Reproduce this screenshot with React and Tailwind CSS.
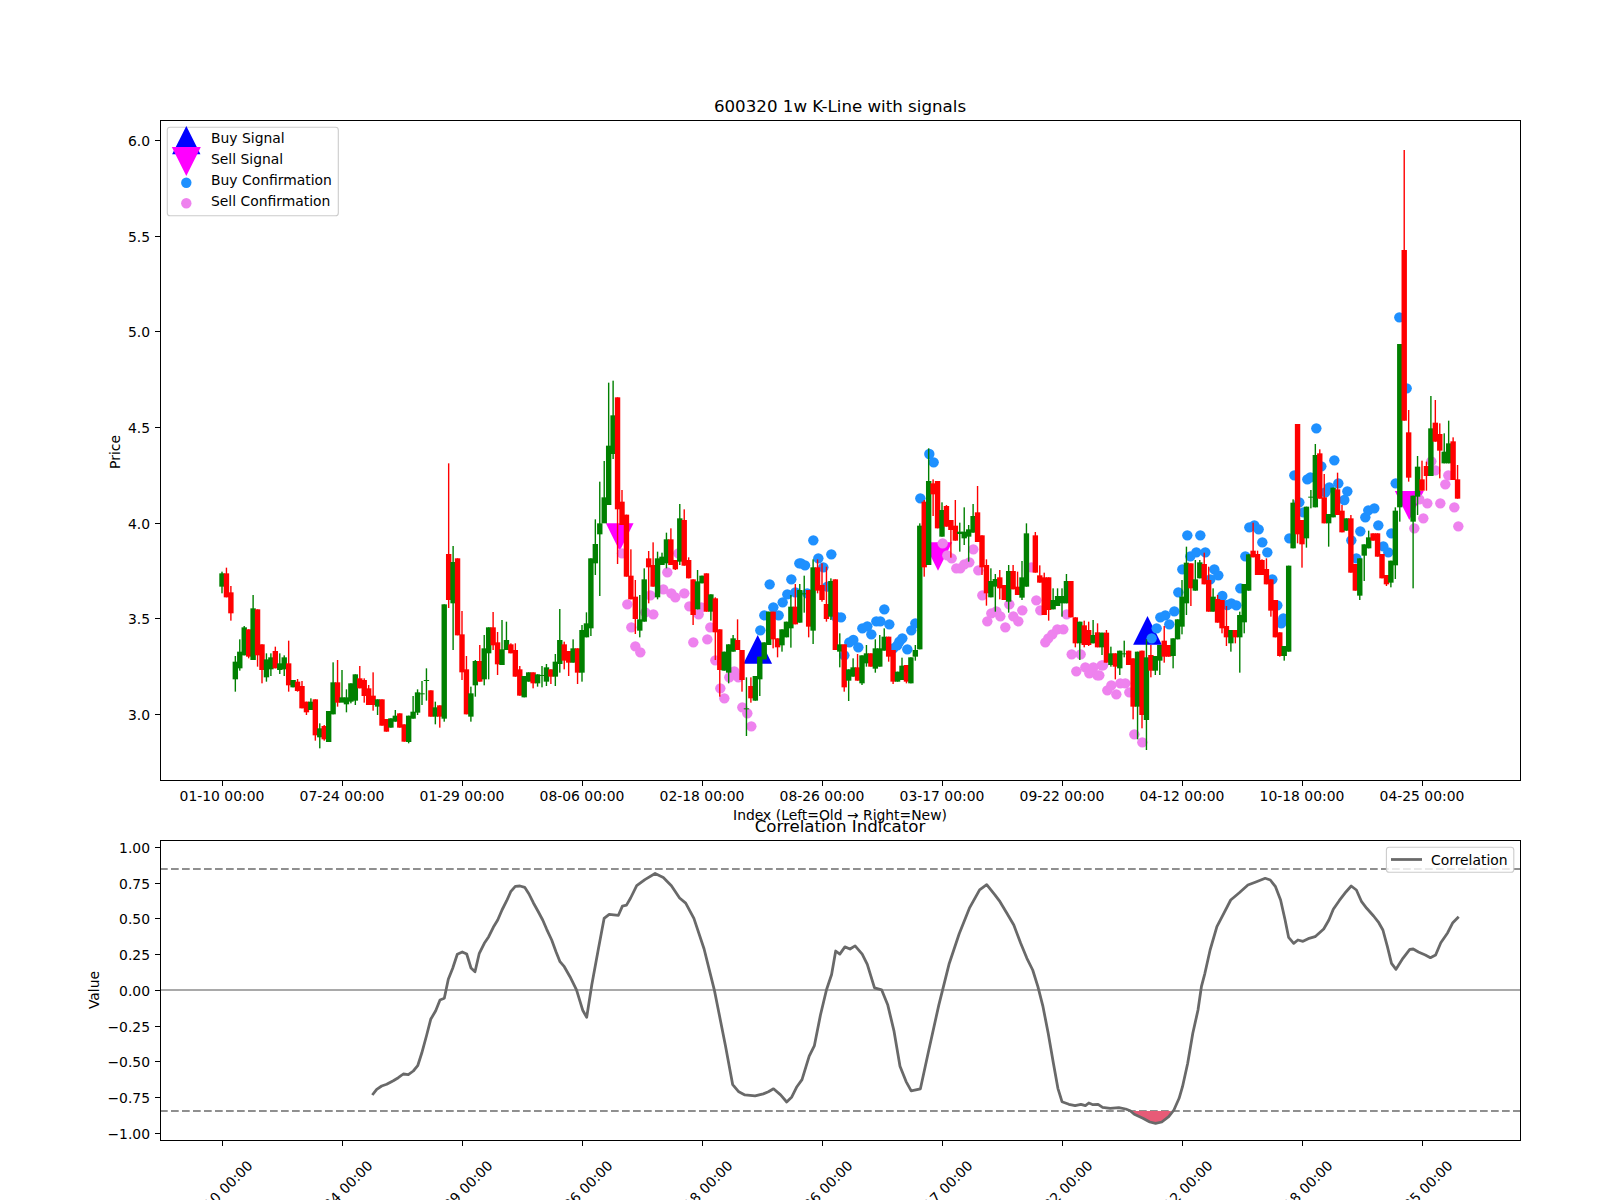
const S1 = `g 580 620 575 640;r 580 652 563 652;r 637 700 618 722;g 845 898 828 935;g 815 865 778 872;g 742 826 738 826;r 748 830 748 835;g 685 840 645 840;r 688 826 688 860;r 793 870 793 910;g 838 892 820 905;g 832 868 820 888;r 813 865 800 865;g 850 870 820 882;g 832 868 826 888;r 850 916 782 935;g 900 922 900 922;r 905 933 897 935;r 918 985 903 985;r 965 997 965 1005;g 965 990 955 990;r 958 1066 958 1082;g 1045 1072 1030 1105;r 1038 1078 1035 1082;g 993 1086 993 1086;g 907 1003 847 1003;r 907 968 840 980;g 952 968 870 960;g 952 973 928 997;g 910 965 910 970;g 883 962 883 975;r 895 925 858 925;r 900 948 895 968;r 925 975 915 975;r 947 975 877 992;g 958 980 958 1005;r 958 1037 958 1037;r 1017 1055 1017 1055;g 1015 1043 1015 1043;g 1007 1025 990 1025;r 1000 1043 1000 1043;r 1033 1085 1033 1085;g 1007 1086 1007 1090;g 995 1016 948 1016;g 937 998 928 1005;g 940 942 903 975;g 900 902 865 962;r 931 1010 931 1010;g 982 1010 965 1033;r 976 1010 976 1043;g 673 1016 673 1025;r 522 660 250 684;g 546 670 498 810;r 535 766 535 766;r 763 877 693 900;r 868 1003 828 1003;g 940 1010 920 1025;g 843 916 840 950;r 843 905 795 905;g 805 898 765 916;g 742 820 742 898;r 742 796 696 810;r 787 853 756 885`;
const S2 = `g 808 855 720 855;g 780 810 725 810;r 793 820 790 820;r 810 890 790 890;r 868 947 858 947;g 888 952 888 952;g 877 905 877 905;r 877 910 877 925;g 883 910 883 920;g 885 888 858 922;g 862 905 852 918;r 868 890 868 912;g 845 890 822 918;g 780 852 687 878;r 793 842 785 868;r 813 848 813 888;g 805 848 778 848;r 805 878 805 912;g 750 878 735 905;g 730 772 697 772;g 535 745 535 768;g 492 550 418 585;g 430 463 305 648;g 352 430 243 380;g 197 375 8 375;g 106 222 2 237;r 52 388 52 552;r 365 435 330 435;r 404 590 404 590;r 587 658 508 658;r 650 717 600 762;g 718 752 645 772;g 598 725 565 725;r 535 562 513 670;r 555 620 487 620;g 535 652 515 658;g 530 555 518 555;g 478 550 458 565;r 478 555 445 555;r 540 568 540 570;g 415 545 372 555;r 420 557 388 557;r 540 595 532 595;r 598 705 598 735;g 604 688 570 688;g 587 610 587 610;r 580 695 580 695;g 643 695 643 722;r 655 757 652 840;r 748 870 748 950;g 815 872 815 872;g 793 878 793 910;g 775 815 765 815;r 780 810 718 810;r 810 900 810 935;g 985 987 892 1068;r 918 955 892 968;g 888 962 888 962;g 830 898 830 948;g 787 838 787 838;g 695 795 695 795;r 695 778 695 805;r 775 802 775 832;g 748 796 748 815;g 725 772 725 772;g 680 745 645 803;r 680 733 612 733`;
const S3 = `g 480 578 462 578;g 490 492 437 548;r 480 590 480 622;g 412 602 388 642;r 412 482 388 490;r 465 510 400 515;r 522 567 410 575;g 453 560 445 570;r 448 660 448 660;g 643 665 610 712;r 643 772 643 785;g 718 752 718 813;g 712 740 685 740;r 712 752 672 752;g 676 760 676 765;g 670 700 645 710;r 670 710 670 710;g 655 716 628 728;g 655 710 615 710;g 620 662 595 662;r 620 680 620 695;r 660 755 660 762;g 725 755 725 755;g 707 750 683 750;r 705 755 705 760;g 682 760 682 760;g 660 680 645 692;g 287 658 280 658;r 215 412 210 440;g 153 405 55 405;r 160 193 148 258;r 153 295 153 295;g 240 320 217 320;r 228 290 225 290;r 270 300 270 383;r 287 332 210 332;g 305 312 278 365;g 305 325 232 345;g 298 320 285 395;g 258 308 222 308;r 247 336 168 336;r 316 412 316 435;r 405 490 388 527;g 453 502 415 502;g 447 470 432 545;r 442 475 420 508;r 465 510 465 510;g 423 515 405 548;r 423 478 405 478;r 470 495 425 495;g 442 503 393 510;g 310 470 280 470;x;r 316 428 306 428;r 436 458 406 458;r 442 555 428 555;r 442 540 442 572;g 510 538 475 538;g 498 528 475 528;g 498 520 475 560;g 453 520 432 520;r 453 562 453 562;r 562 640 562 652;g 575 640 575 690;r 586 645 572 652;r 600 645 575 648;g 615 640 570 640;r 607 652 580 652`;
const S4 = `g 698 742 698 765;r 698 788 690 788;g 760 795 740 800;r 760 800 760 838;g 752 805 752 825;g 760 762 722 772;r 752 795 752 795;r 775 920 775 958;g 755 920 755 1018;r 752 945 752 985;g 772 960 718 1050;r 765 812 735 832;g 768 812 768 825;g 735 782 735 825;r 722 770 678 788;r 735 770 735 770;g 715 768 715 805;g 658 718 658 718;g 590 680 540 703;g 488 610 440 645;r 490 565 490 618;g 538 572 480 572;g 487 535 480 535;r 492 553 458 553;r 540 635 500 635;g 590 635 565 635;r 597 668 585 668;r 600 685 600 700;r 678 712 618 738;g 690 730 690 755;r 690 712 690 730;g 645 712 635 818;g 552 667 552 700;g 463 572 463 572;r 452 472 368 472;r 462 525 452 525;r 480 525 478 525;r 507 553 475 553;r 538 632 538 650;r 600 712 600 712;r 697 768 697 770;g 738 768 738 782;g 497 755 497 755;g 308 445 298 445;r 72 403 72 430;r 360 433 360 503;g 320 415 320 443;g 290 292 270 325;g 165 322 132 322;r 160 296 148 296;r 292 370 222 370;g 342 370 342 440;g 263 352 263 352;r 268 345 218 345;r 332 397 315 397;g 355 392 355 392;r 355 518 345 518;r 492 572 492 572;g 475 587 475 600;g 433 467 433 543;g 412 445 392 445;r 400 422 400 422;r 400 470 400 470;r 462 535 462 535;r 525 553 525 558;g 482 548 482 562;g 332 496 322 537;g -168 322 -168 365;r -450 62 -750 62;r 97 233 30 245;g 287 365 287 565;g 200 290 168 345;r 238 272 182 272;r 198 228 185 272;g 85 228 -12 228;r 68 125 0 125;r 102 152 70 235;g 155 190 100 190;g 130 190 62 190;r 124 240 112 240;r 238 296 195 296`;

const parseCandles = () => {
  const out = [];
  [[S1, 380], [S2, 380], [S3, 430], [S4, 400]].forEach(([s, by]) => {
    s.split(";").forEach((row) => {
      const p = row.trim().split(" ");
      const i = out.length;
      if (p[0] === "x") { out.push(null); return; }
      const [bt, bb, wt, wb] = p.slice(1).map((v) => by + Number(v) / 3);
      out.push({ x: 222 + (i * 120) / 27, c: p[0] === "g" ? "#008000" : "#ff0000", bt, bb, wt, wb });
    });
  });
  return out;
};
const CANDLES = parseCandles();

const toAbs = (s, bx, by, kx, ky = kx) =>
  s.trim().split(/\s+/).map((t) => {
    const [a, b] = t.split(",").map(Number);
    return [bx + a / kx, by + b / ky];
  });

const BLUE = [
  ...toAbs("781,751 793,706 809,613 820,682 836,706 848,667 862,643 874,598 886,637 898,550", 500, 380, 3),
  ...toAbs("3,400 15,406 40,331 55,385 70,412 94,373 82,470 22,490 108,560 123,562 133,676 148,637 160,630 175,652 187,595 202,589 214,613 229,574 241,574 253,538 268,583 280,655 292,646 298,635 307,625 322,658 334,601 346,580 361,205 388,72 401,97", 800, 430, 3),
  ...toAbs("155,715 170,685 181,652 196,646 208,673 223,634 235,577 247,508 262,406 301,406 271,469 289,457 316,457 331,538 343,508 355,526 367,588 382,615 394,610 409,616 421,565 436,469 448,382 463,376 476,388 487,427 502,457 517,538 532,616 544,670 550,655 568,415 583,226 598,307 610,337 622,238 631,232 649,85 664,199 676,277 688,262 703,181 715,250 733,300 742,274 754,421 769,475 781,394 796,352 805,331 823,325 835,376 850,439 865,457 874,400 887,250", 1100, 400, 3),
  ...toAbs("298,562 320,775", 1300, 130, 3),
];
const PINK = [
  ...toAbs("366,520 382,673 394,742 406,799 421,817 436,697 451,646 460,703 490,628 502,577 514,640 526,652 535,520 553,640 568,679 580,787 596,703 604,682 622,778 631,742 646,841 661,925 673,955 688,892 703,874 715,892 727,982 742,1000 754,1039", 500, 380, 3),
  ...toAbs("428,340 442,376 455,385 469,415 481,415 493,403 508,397 520,358 535,421 547,496 562,574 574,550 589,544 601,559 616,592 628,523 640,559 655,574 667,541 694,412 709,511 721,541 736,637 745,625 757,613 772,598 790,598 800,553 815,673 842,673 829,724 856,712 868,730 880,712 892,736 905,706", 800, 430, 3),
  ...toAbs("-2,826 9,796 22,871 34,856 49,883 61,850 76,850 88,877 103,1003 127,1027 943,385 958,298 970,355 982,310 994,184 1006,211 1021,310 1036,253 1045,226 1063,322 1075,379", 1100, 400, 3),
];

const CURVE = [
  ...toAbs("907,975 920,958 935,948 950,943 970,932 985,923 1000,912 1015,914 1030,903 1043,887 1055,850 1070,795 1082,748 1097,722 1110,690 1123,685 1135,628 1148,595 1162,553 1177,546 1190,552 1203,594 1215,605 1228,550 1243,520 1256,500 1270,472 1283,450 1296,420 1310,392 1322,365 1336,349 1350,348 1364,352 1377,372 1390,398 1405,425 1418,450 1430,478 1445,510 1458,545 1470,575 1483,590 1500,620", 70, 770, 3),
  ...toAbs("565,970 571,990 575,997 580,965 586,932 592,900 597,896 606,897 610,888 614,887 618,880 624,868 632,862 642,856 650,860 658,868 666,880 672,885 680,900 690,930 700,970 705,995 711,1025 718,1063 724,1070 730,1073 740,1074 748,1072 753,1070 758,1067 765,1073 771,1080 776,1075 781,1065 786,1058 793,1035 798,1025 804,995 810,970 815,955 819,932 823,935 828,928 833,930 838,927 845,935 850,945 857,968 864,970 870,985 876,1010 882,1045 888,1060 893,1069 902,1067 910,1030 920,985 930,945 940,915 950,890 960,872 967,867 975,877", 0, 0, 0.98),
  ...toAbs("0,365 20,400 40,435 60,490 78,535 95,570 110,620 125,680 140,760 155,850 168,925 180,965 200,973 218,977 235,973 248,977 258,969 270,974 285,973 298,982 320,985 345,983 365,987 378,992 390,1003 415,1015 435,1026 452,1030 470,1026 490,1010 505,990 520,955 530,920 545,850 560,760 575,690 585,620 595,580 610,510 630,440 650,400 670,360 695,338 720,315 745,305 770,295 785,300 800,320 815,360 828,420 838,472 853,490 865,480 880,484 895,476 915,470 940,447 955,420 968,388 985,362 1005,335 1020,318 1035,330 1050,365 1065,385 1085,408 1100,428 1112,450 1125,500 1137,550 1150,568 1170,535 1190,508 1200,507 1215,516 1235,525 1250,533 1265,525 1280,488 1300,458 1315,428 1332,410", 1000, 780, 2.904, 3),
];
const FILL = toAbs("385,993 390,1003 415,1015 435,1026 452,1030 470,1026 490,1010 497,993", 1000, 780, 2.904, 3);
const pts = (a) => a.map(([x, y]) => `${x.toFixed(1)},${y.toFixed(1)}`).join(" ");

const XT = ["01-10", "07-24", "01-29", "08-06", "02-18", "08-26", "03-17", "09-22", "04-12", "10-18", "04-25"].map((t, i) => ({ t: `${t} 00:00`, x: 222 + i * 120 }));
const Y1 = ["6.0", "5.5", "5.0", "4.5", "4.0", "3.5", "3.0"].map((t, i) => [t, Math.round(140 + i * 95.63) + 0.5]);
const Y2 = ["1.00", "0.75", "0.50", "0.25", "0.00", "−0.25", "−0.50", "−0.75", "−1.00"].map((t, i) => [t, Math.round(847 + i * 35.72) + 0.5]);

const tri = (cx, top, bot, up, f) => {
  const h = bot - top;
  return <polygon points={up ? `${cx},${top} ${cx + h / 2},${bot} ${cx - h / 2},${bot}` : `${cx},${bot} ${cx + h / 2},${top} ${cx - h / 2},${top}`} fill={f} />;
};

export default function App() {
  return (
    <div className="w-[1600px] h-[1200px] bg-white overflow-hidden font-['DejaVu_Sans',sans-serif]">
      <svg className="block w-[1600px] h-[1200px] text-[13.9px]" viewBox="0 0 1600 1200" fill="#000">
        <clipPath id="a1"><rect x="160" y="120" width="1360" height="660" /></clipPath>
        <g clipPath="url(#a1)">
          {tri(619.7, 523.3, 551, false, "#ff00ff")}
          {tri(938, 542.3, 570.7, false, "#ff00ff")}
          {tri(1409.3, 491, 520, false, "#ff00ff")}
          {tri(757.7, 635, 663.7, true, "#0000ff")}
          {tri(1147.5, 616, 644.7, true, "#0000ff")}
          {BLUE.map(([x, y], i) => <circle key={i} cx={x} cy={y} r="5.2" fill="#1e90ff" />)}
          {PINK.map(([x, y], i) => <circle key={i} cx={x} cy={y} r="5.2" fill="#ee82ee" />)}
          {CANDLES.map((c, i) => c && (
            <g key={i} fill={c.c}>
              <rect x={c.x - 0.7} y={c.wt} width="1.4" height={Math.max(c.wb - c.wt, 1)} />
              <rect x={c.x - 2.7} y={c.bt} width="5.4" height={Math.max(c.bb - c.bt, 1)} />
            </g>
          ))}
        </g>
        <rect x="160.5" y="120.5" width="1360" height="660" fill="none" stroke="#000" strokeWidth="1.1" shapeRendering="crispEdges" />
        <text x="840" y="112" textAnchor="middle" className="text-[16.67px]">600320 1w K-Line with signals</text>
        {Y1.map(([t, y]) => (
          <g key={t}>
            <line x1="155" x2="160" y1={y} y2={y} stroke="#000" strokeWidth="1.1" shapeRendering="crispEdges" />
            <text x="150" y={y + 5} textAnchor="end">{t}</text>
          </g>
        ))}
        {XT.map(({ t, x }) => (
          <g key={t}>
            <line x1={x + 0.5} x2={x + 0.5} y1="781" y2="786" stroke="#000" strokeWidth="1.1" shapeRendering="crispEdges" />
            <text x={x} y="801" textAnchor="middle">{t}</text>
          </g>
        ))}
        <text x="840" y="820" textAnchor="middle">Index (Left=Old → Right=New)</text>
        <text transform="translate(120 452) rotate(-90)" textAnchor="middle">Price</text>

        <rect x="167.3" y="127.3" width="171" height="88.5" rx="2.8" fill="#fff" fillOpacity="0.8" stroke="#cccccc" strokeWidth="1.1" />
        {tri(186.3, 126, 154.3, true, "#0000ff")}
        {tri(186.3, 147, 176, false, "#ff00ff")}
        <circle cx="186.3" cy="182.7" r="5.2" fill="#1e90ff" />
        <circle cx="186.3" cy="203.3" r="5.2" fill="#ee82ee" />
        <text x="211" y="143">Buy Signal</text>
        <text x="211" y="164">Sell Signal</text>
        <text x="211" y="185">Buy Confirmation</text>
        <text x="211" y="206">Sell Confirmation</text>

        <text x="840" y="832" textAnchor="middle" className="text-[16.67px]">Correlation Indicator</text>
        <line x1="160" x2="1520" y1="990" y2="990" stroke="#a9a9a9" strokeWidth="2" />
        <line x1="160" x2="1520" y1="869" y2="869" stroke="#8f8f8f" strokeWidth="2" strokeDasharray="7.7 3.3" />
        <line x1="160" x2="1520" y1="1111" y2="1111" stroke="#8f8f8f" strokeWidth="2" strokeDasharray="7.7 3.3" />
        <polygon points={pts(FILL)} fill="#e75b77" />
        <polyline points={pts(CURVE)} fill="none" stroke="#696969" strokeWidth="2.78" strokeLinejoin="round" />
        <rect x="160.5" y="840.5" width="1360" height="300" fill="none" stroke="#000" strokeWidth="1.1" shapeRendering="crispEdges" />
        <rect x="1386.4" y="847.3" width="127.4" height="25" rx="2.8" fill="#fff" fillOpacity="0.8" stroke="#cccccc" strokeWidth="1.1" />
        <line x1="1391" x2="1422" y1="859.5" y2="859.5" stroke="#696969" strokeWidth="2.78" />
        <text x="1431" y="864.5">Correlation</text>
        {Y2.map(([t, y]) => (
          <g key={t}>
            <line x1="155" x2="160" y1={y} y2={y} stroke="#000" strokeWidth="1.1" shapeRendering="crispEdges" />
            <text x="150" y={y + 5} textAnchor="end">{t}</text>
          </g>
        ))}
        {XT.map(({ t, x }) => (
          <g key={t}>
            <line x1={x + 0.5} x2={x + 0.5} y1="1141" y2="1146" stroke="#000" strokeWidth="1.1" shapeRendering="crispEdges" />
            <text transform={`translate(${x - 2} 1193) rotate(-45)`} y="5" textAnchor="middle">{t}</text>
          </g>
        ))}
        <text transform="translate(99 990) rotate(-90)" textAnchor="middle">Value</text>
      </svg>
    </div>
  );
}
